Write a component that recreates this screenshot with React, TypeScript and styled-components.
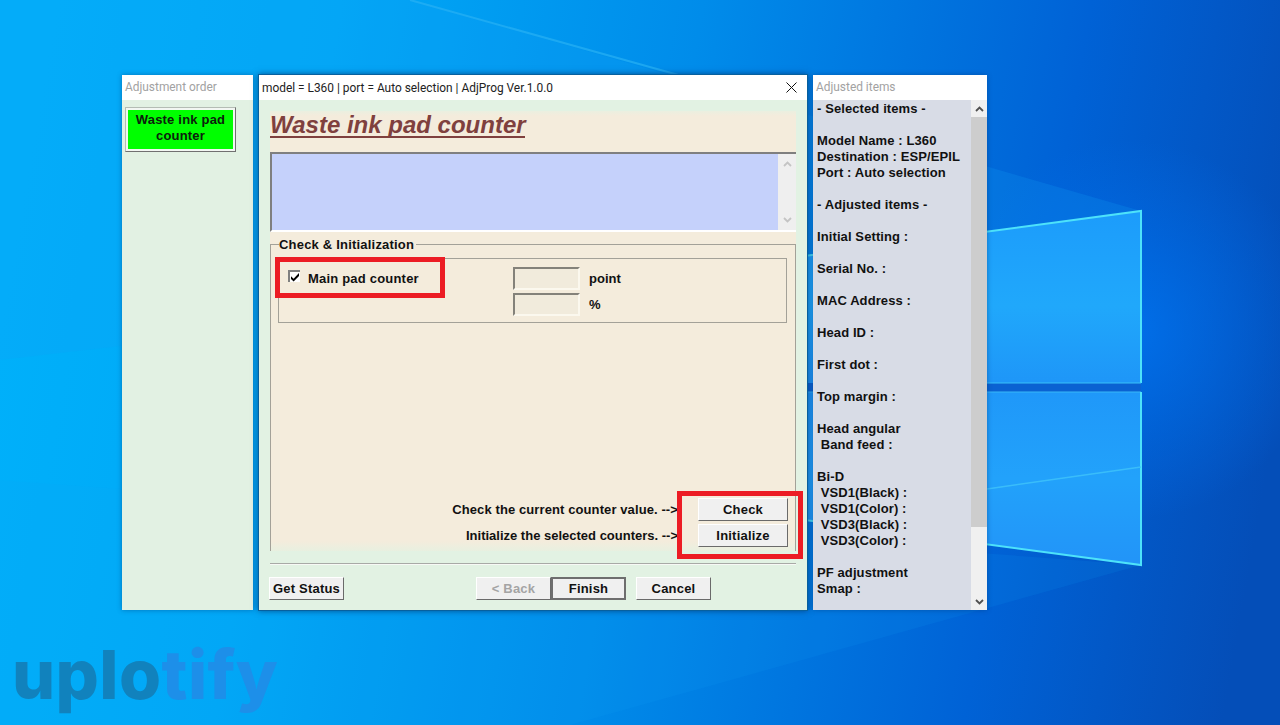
import React from "react";
import styled, { createGlobalStyle } from "styled-components";

const GlobalStyle = createGlobalStyle`
  html, body {
    margin: 0;
    padding: 0;
    background: #0078e0;
  }
  * {
    box-sizing: border-box;
  }
`;

const uiFont = `"Liberation Sans", Arial, sans-serif`;
const titleFont = `Roboto, "Open Sans", sans-serif`;

const ADJUSTED_TEXT = `- Selected items -

Model Name : L360
Destination : ESP/EPIL
Port : Auto selection

- Adjusted items -

Initial Setting :

Serial No. :

MAC Address :

Head ID :

First dot :

Top margin :

Head angular
 Band feed :

Bi-D
 VSD1(Black) :
 VSD1(Color) :
 VSD3(Black) :
 VSD3(Color) :

PF adjustment
Smap :`;

export default function App() {
  return (
    <>
      <GlobalStyle />
      <Desktop>
        <Wallpaper />
        <Windows>
          <SideWindow $width={131}>
            <TitleBar $inactive>Adjustment order</TitleBar>
            <OrderBody>
              <OrderButton>
                Waste ink pad
                <br />
                counter
              </OrderButton>
            </OrderBody>
          </SideWindow>

          <MainWindow>
            <TitleBar>
              model = L360 | port = Auto selection | AdjProg Ver.1.0.0
              <CloseIcon />
            </TitleBar>
            <MainBody>
              <BeigePanel>
                <PageTitle>Waste ink pad counter</PageTitle>
                <MessageBox>
                  <MessageScroll>
                    <Chevron $faded />
                    <Chevron $faded $down />
                  </MessageScroll>
                </MessageBox>
                <CheckGroup>
                  <GroupLegend>Check &amp; Initialization</GroupLegend>
                  <CounterGroup>
                    <CheckLabel>
                      <CheckBox>
                        <svg width="10" height="10" viewBox="0 0 10 10">
                          <path d="M1 4.2l2.6 2.6L9 1v3L3.6 9.6 1 7z" fill="#000" />
                        </svg>
                      </CheckBox>
                      Main pad counter
                    </CheckLabel>
                    <Readouts>
                      <ReadoutRow>
                        <ReadoutField />
                        point
                      </ReadoutRow>
                      <ReadoutRow>
                        <ReadoutField />%
                      </ReadoutRow>
                    </Readouts>
                    <Highlight $left={-4} $top={-2} $width={170} $height={41} />
                  </CounterGroup>
                  <ActionList>
                    <ActionRow>
                      Check the current counter value. --&gt;
                      <ActionButton>Check</ActionButton>
                    </ActionRow>
                    <ActionRow $tight>
                      Initialize the selected counters. --&gt;
                      <ActionButton>Initialize</ActionButton>
                    </ActionRow>
                    <Highlight $left={399} $top={-7} $width={126} $height={68} />
                  </ActionList>
                </CheckGroup>
              </BeigePanel>
              <Separator />
              <WizardBar>
                <WizardButton>Get Status</WizardButton>
                <WizardNav>
                  <WizardButton disabled>&lt; Back</WizardButton>
                  <WizardButton $primary>Finish</WizardButton>
                  <CancelButton>Cancel</CancelButton>
                </WizardNav>
              </WizardBar>
            </MainBody>
          </MainWindow>

          <SideWindow $width={174}>
            <TitleBar $inactive>Adjusted items</TitleBar>
            <ItemsBody>
              <ItemsText>{ADJUSTED_TEXT}</ItemsText>
              <ItemsScroll>
                <ScrollArrow>
                  <Chevron />
                </ScrollArrow>
                <ScrollThumb />
                <ScrollArrow>
                  <Chevron $down />
                </ScrollArrow>
              </ItemsScroll>
            </ItemsBody>
          </SideWindow>
        </Windows>
        <Brand>
          uplo<BrandTail>tify</BrandTail>
        </Brand>
      </Desktop>
    </>
  );
}

function Wallpaper() {
  return (
    <WallpaperSvg viewBox="0 0 1280 725">
      <defs>
        <linearGradient id="base" x1="0" y1="0.45" x2="1" y2="0.55">
          <stop offset="0" stopColor="#00b0fa" />
          <stop offset="0.22" stopColor="#00a8f6" />
          <stop offset="0.5" stopColor="#008cea" />
          <stop offset="0.8" stopColor="#0062d6" />
          <stop offset="1" stopColor="#044eb8" />
        </linearGradient>
        <radialGradient id="glow" gradientUnits="userSpaceOnUse" cx="1130" cy="330" r="190">
          <stop offset="0" stopColor="#0074f0" stopOpacity="0.8" />
          <stop offset="1" stopColor="#0070ee" stopOpacity="0" />
        </radialGradient>
        <linearGradient id="paneTop" x1="0" y1="0" x2="0" y2="1">
          <stop offset="0" stopColor="#1c9cfb" />
          <stop offset="0.55" stopColor="#20a8fb" />
          <stop offset="1" stopColor="#1e96f8" />
        </linearGradient>
        <linearGradient id="paneBottom" x1="0" y1="0" x2="0" y2="1">
          <stop offset="0" stopColor="#1f98f9" />
          <stop offset="0.5" stopColor="#22a2fb" />
          <stop offset="1" stopColor="#2294f8" />
        </linearGradient>
      </defs>
      <rect width="1280" height="725" fill="url(#base)" />
      <rect width="1280" height="725" fill="url(#glow)" />
      <path d="M410 0L1141 211 600 290 0 360 0 0z" fill="#10a0f5" opacity="0.22" />
      <path d="M410 0L682 76" stroke="#28b0f4" strokeWidth="2" opacity="0.7" fill="none" />
      <path d="M1141 565L570 725 0 725 0 480z" fill="#10a4f8" opacity="0.12" />
      <path d="M640 278L1141 211V383H640z" fill="url(#paneTop)" />
      <path d="M640 392H1141V565L640 498z" fill="url(#paneBottom)" />
      <rect x="640" y="383" width="501" height="9" fill="#0a62d2" />
      <path d="M640 278L1141 211V383" stroke="#4de2fa" strokeWidth="2" fill="none" />
      <path d="M640 392H1141" stroke="#38b8f8" strokeWidth="1" fill="none" />
      <path d="M987 383H1141" stroke="#38c0f8" strokeWidth="1" fill="none" />
      <path d="M1141 392V565L640 498" stroke="#4de2fa" strokeWidth="2" fill="none" />
      <path d="M987 489L1141 467" stroke="#40c4fa" strokeWidth="1.5" opacity="0.8" fill="none" />
    </WallpaperSvg>
  );
}

function CloseIcon() {
  return (
    <CloseSvg viewBox="0 0 11 11">
      <path d="M.5.5l10 10M10.5.5l-10 10" stroke="#111" strokeWidth="1" fill="none" />
    </CloseSvg>
  );
}

function Chevron({ $faded, $down }: { $faded?: boolean; $down?: boolean }) {
  return (
    <ChevronSvg viewBox="0 0 9 6" $faded={$faded} $down={$down}>
      <path d="M1 5l3.5-3.5L8 5" strokeWidth="1.8" fill="none" />
    </ChevronSvg>
  );
}

const Desktop = styled.div`
  position: relative;
  width: 1280px;
  height: 725px;
  overflow: hidden;
  font-family: ${uiFont};
  color: #111;
`;

const WallpaperSvg = styled.svg`
  position: absolute;
  inset: 0;
  width: 1280px;
  height: 725px;
`;

const Windows = styled.div`
  position: absolute;
  left: 122px;
  top: 75px;
  display: flex;
  gap: 6px;
  height: 535px;
`;

const SideWindow = styled.section<{ $width: number }>`
  display: flex;
  flex-direction: column;
  width: ${(p) => p.$width}px;
  background: #e2f1e3;
  box-shadow: 0 0 5px rgba(0, 50, 110, 0.45);
`;

const MainWindow = styled.section`
  display: flex;
  flex-direction: column;
  width: 548px;
  background: #e2f2e3;
  box-shadow: 0 0 0 1px #07609e, 0 0 6px 1px rgba(0, 50, 110, 0.7);
`;

const TitleBar = styled.header<{ $inactive?: boolean }>`
  display: flex;
  align-items: center;
  justify-content: space-between;
  flex: none;
  height: 25px;
  padding: 0 10px ${(p) => (p.$inactive ? "2px" : "0")} 3px;
  background: #fff;
  font-family: ${titleFont};
  font-size: 11.9px;
  color: ${(p) => (p.$inactive ? "#a2a2a2" : "#222")};
  white-space: nowrap;
`;

const CloseSvg = styled.svg`
  width: 11px;
  height: 11px;
`;

const ChevronSvg = styled.svg<{ $faded?: boolean; $down?: boolean }>`
  display: block;
  width: 9px;
  height: 6px;
  stroke: ${(p) => (p.$faded ? "#c4c4c4" : "#505050")};
  transform: ${(p) => (p.$down ? "rotate(180deg)" : "none")};
`;

const OrderBody = styled.div`
  flex: 1;
  padding: 7px 0 0 3px;
`;

const OrderButton = styled.button`
  display: block;
  width: 111px;
  height: 45px;
  padding: 0 0 3px;
  background: #00ff00;
  border: 1px solid;
  border-color: #b4bcb4 #707070 #707070 #b4bcb4;
  box-shadow: inset 0 0 0 2px #f2f6f2;
  font: bold 13px/16px ${uiFont};
  letter-spacing: 0.2px;
  color: #0c200c;
`;

const MainBody = styled.div`
  flex: 1;
  display: flex;
  flex-direction: column;
  padding: 11px 11px 0 11px;
`;

const BeigePanel = styled.div`
  display: flex;
  flex-direction: column;
  height: 440px;
  background: linear-gradient(
    #ebefe0 0,
    #f4ecdc 5px,
    #f4ecdc calc(100% - 10px),
    #e8f0e0 100%
  );
`;

const PageTitle = styled.h1`
  align-self: flex-start;
  width: 255px;
  margin: 0;
  height: 27px;
  padding: 0;
  border-bottom: 2px solid #7f403e;
  font: italic bold 24px/28px ${uiFont};
  color: #7f403e;
  white-space: nowrap;
`;

const MessageBox = styled.div`
  display: flex;
  justify-content: flex-end;
  height: 80px;
  margin-top: 14px;
  background: #c5d1fb;
  border: 2px solid;
  border-color: #7f7f7f #fff #fff #7f7f7f;
  border-right-width: 0;
`;

const MessageScroll = styled.div`
  display: flex;
  flex-direction: column;
  align-items: center;
  justify-content: space-between;
  width: 18px;
  padding: 7px 0;
  background: #efefef;
`;

const CheckGroup = styled.fieldset`
  flex: 1;
  min-width: 0;
  margin: 3px 0 0;
  padding: 5px 8px 0 7px;
  border: 1px solid #a3a198;
  border-bottom: none;
`;

const GroupLegend = styled.legend`
  margin-left: 1px;
  padding: 2px 2px 0 0;
  font: bold 13px/16px ${uiFont};
  letter-spacing: 0.2px;
  color: #111;
`;

const CounterGroup = styled.div`
  position: relative;
  display: flex;
  height: 65px;
  padding: 8px 0 0 9px;
  border: 1px solid #a3a198;
`;

const CheckLabel = styled.div`
  display: flex;
  align-items: flex-start;
  width: 225px;
  padding-top: 3px;
  font: bold 13px/18px ${uiFont};
  letter-spacing: 0.2px;
`;

const CheckBox = styled.span`
  display: flex;
  align-items: center;
  justify-content: center;
  flex: none;
  width: 12px;
  height: 12px;
  margin: 0 8px 0 0;
  background: #fff;
  border-top: 2px solid #808080;
  border-left: 2px solid #808080;
`;

const Readouts = styled.div`
  display: flex;
  flex-direction: column;
  gap: 3px;
`;

const ReadoutRow = styled.div`
  display: flex;
  align-items: center;
  gap: 9px;
  font: bold 13px/16px ${uiFont};
`;

const ReadoutField = styled.span`
  display: block;
  width: 67px;
  height: 23px;
  background: #f1ebdc;
  border: 2px solid;
  border-color: #84827a #fbf8ee #fbf8ee #84827a;
`;

const Highlight = styled.div<{ $left: number; $top: number; $width: number; $height: number }>`
  position: absolute;
  left: ${(p) => p.$left}px;
  top: ${(p) => p.$top}px;
  width: ${(p) => p.$width}px;
  height: ${(p) => p.$height}px;
  border: 5px solid #ec1c24;
`;

const ActionList = styled.div`
  position: relative;
  display: flex;
  flex-direction: column;
  gap: 3px;
  margin: 175px -1px 0 0;
`;

const ActionRow = styled.div<{ $tight?: boolean }>`
  display: flex;
  align-items: center;
  justify-content: flex-end;
  gap: 20px;
  font: bold 13px/16px ${uiFont};
  letter-spacing: ${(p) => (p.$tight ? "0" : "0.1px")};
`;

const ActionButton = styled.button`
  flex: none;
  width: 90px;
  height: 23px;
  padding: 0;
  background: #f0f0f0;
  border: 1px solid;
  border-color: #fff #6a6a6a #6a6a6a #fff;
  font: bold 13px/16px ${uiFont};
  letter-spacing: 0.2px;
  color: #111;
`;

const Separator = styled.hr`
  width: 100%;
  height: 2px;
  margin: 12px 0 0;
  background: #f7f9f5;
  border: none;
  border-top: 1px solid #a8aaa6;
`;

const WizardBar = styled.div`
  display: flex;
  margin-top: 12px;
  margin-left: -1px;
`;

const WizardNav = styled.div`
  display: flex;
  margin-left: 132px;
`;

const WizardButton = styled.button<{ $primary?: boolean }>`
  width: 75px;
  height: 23px;
  padding: 0;
  background: #f0f0f0;
  border: ${(p) => (p.$primary ? "2px" : "1px")} solid;
  border-color: ${(p) => (p.$primary ? "#6e6e6e" : "#fff #6a6a6a #6a6a6a #fff")};
  font: bold 13px/16px ${uiFont};
  letter-spacing: 0.2px;
  color: #111;

  &:disabled {
    color: #a4a4a4;
  }
`;

const CancelButton = styled(WizardButton)`
  margin-left: 10px;
`;

const ItemsBody = styled.div`
  flex: 1;
  display: flex;
  min-height: 0;
`;

const ItemsText = styled.pre`
  flex: 1;
  margin: 0;
  padding: 1px 0 0 4px;
  background: #d8dce6;
  font: bold 13px/16px ${uiFont};
  letter-spacing: 0.1px;
  color: #111;
`;

const ItemsScroll = styled.div`
  display: flex;
  flex-direction: column;
  flex: none;
  width: 16px;
  background: #f0f0f0;
`;

const ScrollArrow = styled.div`
  display: flex;
  align-items: center;
  justify-content: center;
  flex: none;
  height: 17px;

  &:last-child {
    margin-top: auto;
  }
`;

const ScrollThumb = styled.div`
  flex: none;
  height: 410px;
  background: #cdcdcd;
`;

const Brand = styled.div`
  position: absolute;
  left: 12px;
  top: 630px;
  font: 800 68px/88px Inter, "Open Sans", sans-serif;
  letter-spacing: 0.4px;
  color: #1182bd;
`;

const BrandTail = styled.span`
  color: #1d8fe9;
`;
